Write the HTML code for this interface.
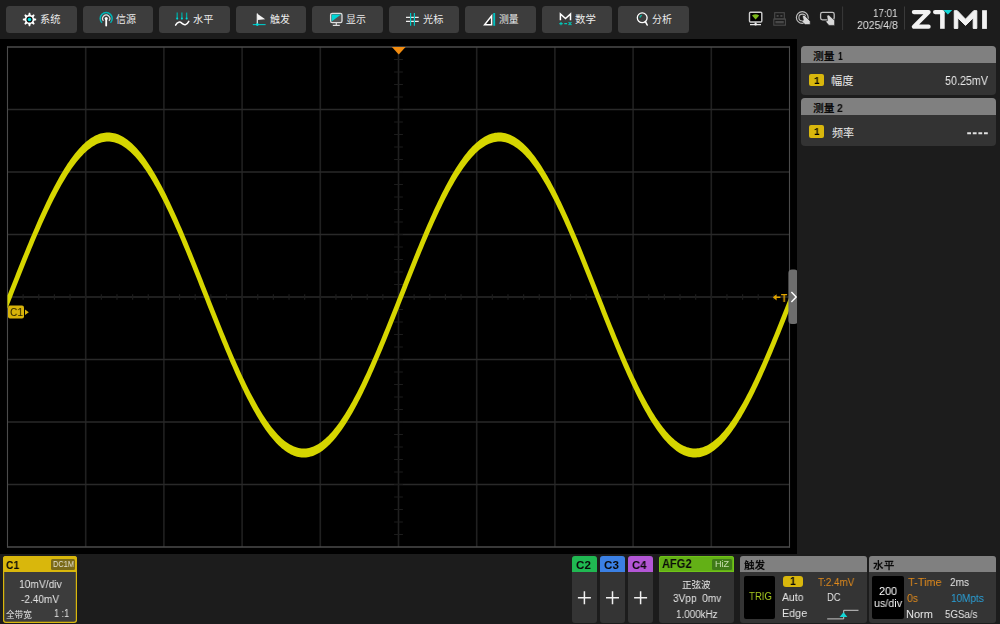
<!DOCTYPE html>
<html lang="zh"><head><meta charset="utf-8"><title>Oscilloscope</title>
<style>
html,body{margin:0;padding:0;background:#1b1b1b;}
body{width:1000px;height:624px;position:relative;overflow:hidden;font-family:"Liberation Sans",sans-serif;}
.abs,.t,.cj,.btn,.pn{position:absolute;}
.t{white-space:pre;transform-origin:0 0;display:block;will-change:transform;}
.cj{display:block;overflow:visible;}
.cj text{font-family:"Liberation Sans","Noto Sans CJK SC",sans-serif;}
#top{left:0;top:0;width:1000px;height:39px;background:#1c1c1c;}
.btn{top:6px;width:70.4px;height:27px;background:#3d3d3d;border-radius:3.5px;}
#scope{left:0;top:39px;width:797px;height:514.5px;background:#000;}
#side{left:797px;top:39px;width:203px;height:514.5px;background:#1c1c1c;}
#bot{left:0;top:553.5px;width:1000px;height:70.5px;background:#1c1c1c;}
.hd{position:absolute;left:0;top:0;right:0;}
</style></head><body>

<div id="top" class="abs"></div>
<div class="btn" style="left:6.4px"></div>
<svg class="cj" style="left:39.73px;top:12.79px" width="20.43" height="13.28" viewBox="0 -10.21 20.43 13.28"><text x="0" y="0" font-size="10.21" fill="#ececec">系统</text></svg>
<div class="btn" style="left:82.9px"></div>
<svg class="cj" style="left:116.32px;top:12.91px" width="19.93" height="12.95" viewBox="0 -9.96 19.93 12.95"><text x="0" y="0" font-size="9.96" fill="#ececec">信源</text></svg>
<div class="btn" style="left:159.4px"></div>
<svg class="cj" style="left:192.68px;top:12.73px" width="20.5" height="13.32" viewBox="0 -10.25 20.5 13.32"><text x="0" y="0" font-size="10.25" fill="#ececec">水平</text></svg>
<div class="btn" style="left:235.9px"></div>
<svg class="cj" style="left:269.53px;top:12.93px" width="19.96" height="12.97" viewBox="0 -9.98 19.96 12.97"><text x="0" y="0" font-size="9.98" fill="#ececec">触发</text></svg>
<div class="btn" style="left:312.4px"></div>
<svg class="cj" style="left:346.44px;top:12.73px" width="19.81" height="12.88" viewBox="0 -9.91 19.81 12.88"><text x="0" y="0" font-size="9.91" fill="#ececec">显示</text></svg>
<div class="btn" style="left:388.9px"></div>
<svg class="cj" style="left:422.7px;top:12.79px" width="20.35" height="13.23" viewBox="0 -10.18 20.35 13.23"><text x="0" y="0" font-size="10.18" fill="#ececec">光标</text></svg>
<div class="btn" style="left:465.4px"></div>
<svg class="cj" style="left:499.48px;top:12.97px" width="19.65" height="12.77" viewBox="0 -9.82 19.65 12.77"><text x="0" y="0" font-size="9.82" fill="#ececec">测量</text></svg>
<div class="btn" style="left:541.9px"></div>
<svg class="cj" style="left:575.47px;top:12.68px" width="20.78" height="13.51" viewBox="0 -10.39 20.78 13.51"><text x="0" y="0" font-size="10.39" fill="#ececec">数学</text></svg>
<div class="btn" style="left:618.4px"></div>
<svg class="cj" style="left:652.41px;top:12.89px" width="19.97" height="12.98" viewBox="0 -9.98 19.97 12.98"><text x="0" y="0" font-size="9.98" fill="#ececec">分析</text></svg>
<svg class="abs" style="left:0;top:0" width="1000" height="39" viewBox="0 0 1000 39"><path fill="#fff" d="M28.25 14.97L28.83 12.83L30.17 12.83L30.75 14.97L31.82 15.41L33.74 14.31L34.69 15.26L33.59 17.18L34.03 18.25L36.17 18.83L36.17 20.17L34.03 20.75L33.59 21.82L34.69 23.74L33.74 24.69L31.82 23.59L30.75 24.03L30.17 26.17L28.83 26.17L28.25 24.03L27.18 23.59L25.26 24.69L24.31 23.74L25.41 21.82L24.97 20.75L22.83 20.17L22.83 18.83L24.97 18.25L25.41 17.18L24.31 15.26L25.26 14.31L27.18 15.41Z"/><circle cx="29.5" cy="19.5" r="3.1" fill="#111"/><circle cx="29.5" cy="19.5" r="1.8" fill="#00d8d8"/><path d="M101.96 22.84A6.0 6.0 0 1 1 110.44 22.84" fill="none" stroke="#00b4b4" stroke-width="1.5"/><path d="M103.44 20.91A3.6 3.6 0 1 1 108.96 20.91" fill="none" stroke="#e0e0e0" stroke-width="1.2"/><circle cx="106.2" cy="18.6" r="1.5" fill="#fff"/><path d="M106.2 18.6V25.6" stroke="#fff" stroke-width="1.8" stroke-linecap="round"/><path d="M177.2 12.6V19.2" stroke="#00a8a0" stroke-width="1.3"/><circle cx="177.2" cy="18.5" r="1" fill="#00d8d8"/><path d="M181.9 12.6V19.2" stroke="#00a8a0" stroke-width="1.3"/><circle cx="181.9" cy="18.5" r="1" fill="#00d8d8"/><path d="M186.6 12.6V19.2" stroke="#00a8a0" stroke-width="1.3"/><circle cx="186.6" cy="18.5" r="1" fill="#00d8d8"/><path d="M175.6 25.2C177.5 21.3 180 21.6 182 23.4S186.6 25.6 188.8 21.4" fill="none" stroke="#fff" stroke-width="1.5" stroke-linecap="round"/><path d="M257.3 13.6V24.2" stroke="#eee" stroke-width="1.2"/><path d="M257 13.4L265.2 19.3L257.6 20Z" fill="#f4f4f4"/><path d="M252.8 24.6H265.6" stroke="#00c8c8" stroke-width="1.1"/><circle cx="257.3" cy="24.6" r="1.4" fill="#00d8d8"/><rect x="330.6" y="13.4" width="11.4" height="9.2" rx="1.6" fill="#555" stroke="#ddd" stroke-width="1.3"/><path d="M331.6 14.4H341L331.6 21.6Z" fill="#00d8d8"/><path d="M336.3 23V25.2M332.8 25.3H339.8" stroke="#ddd" stroke-width="1.2" fill="none"/><path d="M406 17.4H418.7M406 21.4H418.7" stroke="#f0f0f0" stroke-width="1.1"/><path d="M410.6 13V25.8M414.4 13V25.8" stroke="#00c8c8" stroke-width="1.2"/><path d="M484.6 24.7H491.6V15.8Z" fill="#222" stroke="#fff" stroke-width="1.5" stroke-linejoin="miter"/><path d="M494.2 13V25.8" stroke="#00c0c0" stroke-width="1.9"/><path d="M560.4 20.2V13.9L565.5 18.6L570.5 13.9V20.2" fill="none" stroke="#fff" stroke-width="1.5" stroke-linejoin="miter"/><path d="M559.3 23.6H562.7M561 21.9V25.3M564.3 23.6H567.1M568.6 22.2L571.4 25M571.4 22.2L568.6 25" stroke="#00c8b8" stroke-width="1.1" fill="none"/><circle cx="642.2" cy="17.8" r="4.9" fill="none" stroke="#fff" stroke-width="1.3"/><path d="M645.4 21.6L647.2 25" stroke="#fff" stroke-width="1.6" stroke-linecap="round"/><path d="M639.9 17.6A2.6 2.6 0 0 1 641.8 15.4" stroke="#00c0a8" stroke-width="1.3" fill="none"/><rect x="749.5" y="12.2" width="12.3" height="9.8" rx="1" fill="#000" stroke="#cfcfcf" stroke-width="1.4"/><path d="M752 15.6Q755.6 12.9 759.2 15.6L755.6 19.6Z" fill="#7cb81c"/><path d="M755.6 22.6V24.6M750 24.7H761" stroke="#e8e8e8" stroke-width="1.3"/><circle cx="755.6" cy="24.3" r="1.3" fill="#f0f0f0"/><rect x="774.7" y="12.7" width="9.6" height="6.3" fill="none" stroke="#4a4a4a" stroke-width="1.1"/><rect x="776.6" y="15" width="2" height="1.8" fill="#4a4a4a"/><rect x="780.4" y="15" width="2" height="1.8" fill="#4a4a4a"/><rect x="773.8" y="19" width="11.6" height="6.2" fill="none" stroke="#4a4a4a" stroke-width="1.1"/><rect x="775.4" y="21" width="8.4" height="2.4" fill="#484848"/><circle cx="802.3" cy="17.5" r="5.9" fill="none" stroke="#bdbdbd" stroke-width="1.2"/><circle cx="802.3" cy="17.5" r="3.4" fill="none" stroke="#bdbdbd" stroke-width="1.1"/><path d="M802.4 15.8L804.2 15.2L810.2 21.2V24.6H805.2L801.6 21.4L803.4 20.2Z" fill="#d8d8d8" stroke="#1c1c1c" stroke-width="0.6"/><rect x="820.6" y="12.4" width="13.6" height="7.4" rx="1.8" fill="none" stroke="#bdbdbd" stroke-width="1.3"/><path d="M826.8 15.6L828.8 15L834.6 20.6V25.4H829L825.6 21.6L827.6 20.6Z" fill="#d8d8d8" stroke="#1c1c1c" stroke-width="0.6"/><path d="M842.6 6.5V30M904.5 6.5V29.6" stroke="#3a3a3a" stroke-width="1"/><path d="M913.9 12.1H928.6L913.9 26.65H928.6" fill="none" stroke="#f2f2f2" stroke-width="4.25" stroke-linecap="round" stroke-linejoin="round"/><path d="M935.1 12.1H942.4" fill="none" stroke="#f2f2f2" stroke-width="4.25" stroke-linecap="round"/><rect x="940.1" y="12" width="4.6" height="16.8" fill="#f2f2f2"/><path d="M943.3 10H952.3L947.9 14.6Z" fill="#12d6d6"/><path d="M954.25 28.4V10.7H957.3L965.5 19.2L973.7 10.7H976.8V28.4H973.2V17.9L965.5 25.4L957.8 17.9V28.4Z" fill="#f2f2f2" stroke="#f2f2f2" stroke-width="1" stroke-linejoin="round"/><rect x="982.1" y="10.2" width="4.8" height="18.7" fill="#f2f2f2"/></svg>
<span class="t" style="left:873.16px;top:6.94px;font-size:11.63px;line-height:11.63px;color:#e0e0e0;transform:scaleX(0.8392);">17:01</span>
<span class="t" style="left:857.07px;top:18.94px;font-size:11.63px;line-height:11.63px;color:#e0e0e0;transform:scaleX(0.9033);">2025/4/8</span>
<div id="scope" class="abs"></div>
<svg class="abs" style="left:0;top:0" width="1000" height="560" viewBox="0 0 1000 560"><path d="M85.7 47.0V547.0M163.9 47.0V547.0M242.1 47.0V547.0M320.3 47.0V547.0M476.7 47.0V547.0M554.9 47.0V547.0M633.1 47.0V547.0M711.3 47.0V547.0" stroke="#202020" stroke-width="1.6" fill="none"/><path d="M7.5 109.5H789.5M7.5 172H789.5M7.5 234.5H789.5M7.5 359.5H789.5M7.5 422H789.5M7.5 484.5H789.5" stroke="#292929" stroke-width="1.7" fill="none"/><path d="M398.5 47.0V547.0" stroke="#202020" stroke-width="1.6" fill="none"/><path d="M7.5 297H789.5" stroke="#2a2a2a" stroke-width="1.7" fill="none"/><path d="M23.14 294.2V299.8M38.78 294.2V299.8M54.42 294.2V299.8M70.06 294.2V299.8M85.7 294.2V299.8M101.34 294.2V299.8M116.98 294.2V299.8M132.62 294.2V299.8M148.26 294.2V299.8M163.9 294.2V299.8M179.54 294.2V299.8M195.18 294.2V299.8M210.82 294.2V299.8M226.46 294.2V299.8M242.1 294.2V299.8M257.74 294.2V299.8M273.38 294.2V299.8M289.02 294.2V299.8M304.66 294.2V299.8M320.3 294.2V299.8M335.94 294.2V299.8M351.58 294.2V299.8M367.22 294.2V299.8M382.86 294.2V299.8M398.5 294.2V299.8M414.14 294.2V299.8M429.78 294.2V299.8M445.42 294.2V299.8M461.06 294.2V299.8M476.7 294.2V299.8M492.34 294.2V299.8M507.98 294.2V299.8M523.62 294.2V299.8M539.26 294.2V299.8M554.9 294.2V299.8M570.54 294.2V299.8M586.18 294.2V299.8M601.82 294.2V299.8M617.46 294.2V299.8M633.1 294.2V299.8M648.74 294.2V299.8M664.38 294.2V299.8M680.02 294.2V299.8M695.66 294.2V299.8M711.3 294.2V299.8M726.94 294.2V299.8M742.58 294.2V299.8M758.22 294.2V299.8M773.86 294.2V299.8M394.1 59.5H402.9M394.1 72H402.9M394.1 84.5H402.9M394.1 97H402.9M394.1 109.5H402.9M394.1 122H402.9M394.1 134.5H402.9M394.1 147H402.9M394.1 159.5H402.9M394.1 172H402.9M394.1 184.5H402.9M394.1 197H402.9M394.1 209.5H402.9M394.1 222H402.9M394.1 234.5H402.9M394.1 247H402.9M394.1 259.5H402.9M394.1 272H402.9M394.1 284.5H402.9M394.1 297H402.9M394.1 309.5H402.9M394.1 322H402.9M394.1 334.5H402.9M394.1 347H402.9M394.1 359.5H402.9M394.1 372H402.9M394.1 384.5H402.9M394.1 397H402.9M394.1 409.5H402.9M394.1 422H402.9M394.1 434.5H402.9M394.1 447H402.9M394.1 459.5H402.9M394.1 472H402.9M394.1 484.5H402.9M394.1 497H402.9M394.1 509.5H402.9M394.1 522H402.9M394.1 534.5H402.9" stroke="#1c1c1c" stroke-width="1.2" fill="none"/><path d="M7.5 47.0H789.5M7.5 547.0H789.5" stroke="#4b4b4b" stroke-width="1.6" fill="none"/><path d="M7.5 46.2V547.8M789.5 46.2V547.8" stroke="#4b4b4b" stroke-width="1.1" fill="none"/><path fill="#d6d600" d="M7.5 295.41L9 291.6L10.5 287.79L12 283.99L13.5 280.19L15 276.39L16.5 272.61L18 268.84L19.5 265.07L21 261.33L22.5 257.6L24 253.89L25.5 250.2L27 246.54L28.5 242.9L30 239.29L31.5 235.71L33 232.16L34.5 228.65L36 225.17L37.5 221.74L39 218.34L40.5 214.98L42 211.67L43.5 208.4L45 205.18L46.5 202.02L48 198.9L49.5 195.84L51 192.83L52.5 189.88L54 186.99L55.5 184.15L57 181.38L58.5 178.68L60 176.03L61.5 173.46L63 170.95L64.5 168.51L66 166.15L67.5 163.85L69 161.63L70.5 159.48L72 157.41L73.5 155.42L75 153.5L76.5 151.66L78 149.9L79.5 148.23L81 146.63L82.5 145.12L84 143.69L85.5 142.34L87 141.08L88.5 139.91L90 138.82L91.5 137.81L93 136.9L94.5 136.06L96 135.32L97.5 134.66L99 134.09L100.5 133.61L102 133.21L103.5 132.9L105 132.68L106.5 132.55L108 132.5L109.5 132.54L111 132.67L112.5 132.88L114 133.18L115.5 133.57L117 134.05L118.5 134.61L120 135.26L121.5 136L123 136.82L124.5 137.73L126 138.73L127.5 139.81L129 140.98L130.5 142.24L132 143.57L133.5 145L135 146.5L136.5 148.09L138 149.76L139.5 151.51L141 153.34L142.5 155.25L144 157.24L145.5 159.31L147 161.45L148.5 163.66L150 165.95L151.5 168.31L153 170.75L154.5 173.25L156 175.82L157.5 178.45L159 181.15L160.5 183.92L162 186.75L163.5 189.63L165 192.58L166.5 195.58L168 198.64L169.5 201.75L171 204.92L172.5 208.13L174 211.39L175.5 214.7L177 218.06L178.5 221.45L180 224.89L181.5 228.36L183 231.87L184.5 235.41L186 238.99L187.5 242.6L189 246.23L190.5 249.9L192 253.58L193.5 257.29L195 261.02L196.5 264.76L198 268.52L199.5 272.29L201 276.08L202.5 279.87L204 283.67L205.5 287.48L207 291.28L208.5 295.09L210 298.89L211.5 302.69L213 306.49L214.5 310.27L216 314.04L217.5 317.8L219 321.55L220.5 325.27L222 328.98L223.5 332.67L225 336.33L226.5 339.96L228 343.57L229.5 347.15L231 350.69L232.5 354.2L234 357.67L235.5 361.1L237 364.5L238.5 367.85L240 371.16L241.5 374.42L243 377.63L244.5 380.79L246 383.9L247.5 386.95L249 389.95L250.5 392.89L252 395.78L253.5 398.6L255 401.36L256.5 404.05L258 406.68L259.5 409.24L261 411.73L262.5 414.16L264 416.51L265.5 418.78L267 420.99L268.5 423.11L270 425.16L271.5 427.13L273 429.02L274.5 430.83L276 432.56L277.5 434.2L279 435.76L280.5 437.24L282 438.63L283.5 439.93L285 441.14L286.5 442.26L288 443.29L289.5 444.23L291 445.08L292.5 445.84L294 446.5L295.5 447.07L297 447.55L298.5 447.93L300 448.21L301.5 448.4L303 448.49L304.5 448.49L306 448.39L307.5 448.19L309 447.9L310.5 447.51L312 447.03L313.5 446.45L315 445.78L316.5 445.02L318 444.16L319.5 443.21L321 442.17L322.5 441.04L324 439.82L325.5 438.51L327 437.12L328.5 435.64L330 434.07L331.5 432.42L333 430.69L334.5 428.87L336 426.97L337.5 424.99L339 422.94L340.5 420.81L342 418.6L343.5 416.31L345 413.96L346.5 411.53L348 409.03L349.5 406.46L351 403.83L352.5 401.13L354 398.36L355.5 395.54L357 392.65L358.5 389.7L360 386.7L361.5 383.64L363 380.53L364.5 377.36L366 374.15L367.5 370.88L369 367.57L370.5 364.22L372 360.82L373.5 357.38L375 353.91L376.5 350.39L378 346.85L379.5 343.27L381 339.66L382.5 336.02L384 332.36L385.5 328.67L387 324.96L388.5 321.24L390 317.49L391.5 313.73L393 309.95L394.5 306.17L396 302.38L397.5 298.58L399 294.77L400.5 290.96L402 287.16L403.5 283.35L405 279.56L406.5 275.76L408 271.98L409.5 268.21L411 264.45L412.5 260.71L414 256.98L415.5 253.27L417 249.59L418.5 245.93L420 242.3L421.5 238.69L423 235.12L424.5 231.58L426 228.07L427.5 224.6L429 221.17L430.5 217.77L432 214.43L433.5 211.12L435 207.86L436.5 204.65L438 201.49L439.5 198.39L441 195.33L442.5 192.33L444 189.39L445.5 186.51L447 183.69L448.5 180.93L450 178.23L451.5 175.6L453 173.04L454.5 170.54L456 168.11L457.5 165.76L459 163.48L460.5 161.27L462 159.13L463.5 157.07L465 155.09L466.5 153.19L468 151.36L469.5 149.62L471 147.96L472.5 146.37L474 144.88L475.5 143.46L477 142.13L478.5 140.88L480 139.72L481.5 138.64L483 137.65L484.5 136.75L486 135.93L487.5 135.2L489 134.56L490.5 134.01L492 133.54L493.5 133.15L495 132.86L496.5 132.65L498 132.53L499.5 132.5L501 132.56L502.5 132.7L504 132.93L505.5 133.24L507 133.65L508.5 134.14L510 134.71L511.5 135.38L513 136.13L514.5 136.97L516 137.89L517.5 138.91L519 140L520.5 141.19L522 142.45L523.5 143.81L525 145.24L526.5 146.76L528 148.36L529.5 150.05L531 151.81L532.5 153.66L534 155.58L535.5 157.58L537 159.66L538.5 161.81L540 164.04L541.5 166.34L543 168.71L544.5 171.16L546 173.67L547.5 176.25L549 178.9L550.5 181.61L552 184.39L553.5 187.22L555 190.12L556.5 193.08L558 196.09L559.5 199.16L561 202.28L562.5 205.45L564 208.67L565.5 211.94L567 215.26L568.5 218.62L570 222.02L571.5 225.46L573 228.94L574.5 232.46L576 236.01L577.5 239.59L579 243.2L580.5 246.84L582 250.51L583.5 254.2L585 257.91L586.5 261.64L588 265.39L589.5 269.15L591 272.92L592.5 276.71L594 280.5L595.5 284.31L597 288.11L598.5 291.92L600 295.72L601.5 299.53L603 303.32L604.5 307.12L606 310.9L607.5 314.67L609 318.43L610.5 322.17L612 325.89L613.5 329.6L615 333.28L616.5 336.93L618 340.57L619.5 344.17L621 347.74L622.5 351.28L624 354.78L625.5 358.25L627 361.67L628.5 365.06L630 368.4L631.5 371.7L633 374.95L634.5 378.16L636 381.31L637.5 384.41L639 387.46L640.5 390.45L642 393.38L643.5 396.25L645 399.06L646.5 401.81L648 404.49L649.5 407.11L651 409.66L652.5 412.14L654 414.55L655.5 416.89L657 419.16L658.5 421.35L660 423.46L661.5 425.5L663 427.45L664.5 429.33L666 431.13L667.5 432.84L669 434.47L670.5 436.02L672 437.48L673.5 438.85L675 440.13L676.5 441.33L678 442.44L679.5 443.46L681 444.38L682.5 445.22L684 445.96L685.5 446.6L687 447.16L688.5 447.62L690 447.98L691.5 448.25L693 448.42L694.5 448.5L696 448.48L697.5 448.36L699 448.15L700.5 447.84L702 447.44L703.5 446.94L705 446.35L706.5 445.66L708 444.88L709.5 444.01L711 443.04L712.5 441.99L714 440.84L715.5 439.61L717 438.29L718.5 436.88L720 435.38L721.5 433.8L723 432.14L724.5 430.39L726 428.56L727.5 426.65L729 424.66L730.5 422.59L732 420.44L733.5 418.22L735 415.93L736.5 413.56L738 411.12L739.5 408.61L741 406.03L742.5 403.38L744 400.67L745.5 397.9L747 395.06L748.5 392.16L750 389.21L751.5 386.19L753 383.12L754.5 380L756 376.83L757.5 373.6L759 370.33L760.5 367.02L762 363.65L763.5 360.25L765 356.81L766.5 353.32L768 349.81L769.5 346.25L771 342.67L772.5 339.06L774 335.41L775.5 331.75L777 328.06L778.5 324.34L780 320.61L781.5 316.86L783 313.1L784.5 309.32L786 305.54L787.5 301.74L789 297.94L789.5 296.67L789.5 309.81L789 311.08L787.5 314.87L786 318.65L784.5 322.42L783 326.18L781.5 329.92L780 333.64L778.5 337.34L777 341.02L775.5 344.68L774 348.31L772.5 351.91L771 355.47L769.5 359.01L768 362.51L766.5 365.98L765 369.4L763.5 372.79L762 376.13L760.5 379.43L759 382.68L757.5 385.88L756 389.03L754.5 392.13L753 395.17L751.5 398.16L750 401.09L748.5 403.97L747 406.78L745.5 409.53L744 412.21L742.5 414.83L741 417.38L739.5 419.87L738 422.28L736.5 424.63L735 426.9L733.5 429.09L732 431.22L730.5 433.26L729 435.23L727.5 437.12L726 438.93L724.5 440.66L723 442.31L721.5 443.88L720 445.37L718.5 446.77L717 448.08L715.5 449.32L714 450.46L712.5 451.53L711 452.5L709.5 453.39L708 454.19L706.5 454.91L705 455.54L703.5 456.08L702 456.53L700.5 456.9L699 457.18L697.5 457.37L696 457.48L694.5 457.5L693 457.43L691.5 457.27L690 457.03L688.5 456.7L687 456.28L685.5 455.77L684 455.18L682.5 454.5L681 453.74L679.5 452.88L678 451.94L676.5 450.92L675 449.81L673.5 448.61L672 447.33L670.5 445.96L669 444.51L667.5 442.98L666 441.36L664.5 439.66L663 437.89L661.5 436.03L660 434.09L658.5 432.08L657 429.99L655.5 427.82L654 425.58L652.5 423.27L651 420.88L649.5 418.43L648 415.9L646.5 413.31L645 410.65L643.5 407.93L642 405.14L640.5 402.3L639 399.39L637.5 396.42L636 393.4L634.5 390.33L633 387.2L631.5 384.02L630 380.79L628.5 377.51L627 374.18L625.5 370.82L624 367.41L622.5 363.96L621 360.47L619.5 356.95L618 353.4L616.5 349.81L615 346.19L613.5 342.55L612 338.88L610.5 335.18L609 331.47L607.5 327.74L606 323.99L604.5 320.22L603 316.45L601.5 312.66L600 308.86L598.5 305.06L597 301.26L595.5 297.45L594 293.64L592.5 289.84L591 286.04L589.5 282.25L588 278.47L586.5 274.7L585 270.95L583.5 267.21L582 263.49L580.5 259.79L579 256.11L577.5 252.46L576 248.83L574.5 245.24L573 241.67L571.5 238.14L570 234.64L568.5 231.18L567 227.76L565.5 224.38L564 221.04L562.5 217.75L561 214.51L559.5 211.31L558 208.17L556.5 205.08L555 202.04L553.5 199.06L552 196.14L550.5 193.28L549 190.48L547.5 187.74L546 185.07L544.5 182.46L543 179.92L541.5 177.45L540 175.05L538.5 172.73L537 170.47L535.5 168.3L534 166.19L532.5 164.17L531 162.23L529.5 160.36L528 158.58L526.5 156.88L525 155.27L523.5 153.73L522 152.29L520.5 150.93L519 149.66L517.5 148.48L516 147.39L514.5 146.38L513 145.47L511.5 144.65L510 143.93L508.5 143.3L507 142.76L505.5 142.32L504 141.97L502.5 141.72L501 141.56L499.5 141.5L498 141.54L496.5 141.67L495 141.9L493.5 142.22L492 142.64L490.5 143.15L489 143.76L487.5 144.46L486 145.26L484.5 146.15L483 147.13L481.5 148.2L480 149.36L478.5 150.6L477 151.94L475.5 153.37L474 154.88L472.5 156.47L471 158.15L469.5 159.91L468 161.75L466.5 163.68L465 165.68L463.5 167.76L462 169.92L460.5 172.16L459 174.46L457.5 176.84L456 179.3L454.5 181.82L453 184.41L451.5 187.06L450 189.79L448.5 192.57L447 195.42L445.5 198.33L444 201.29L442.5 204.31L441 207.39L439.5 210.52L438 213.71L436.5 216.94L435 220.22L433.5 223.54L432 226.91L430.5 230.32L429 233.77L427.5 237.26L426 240.78L424.5 244.34L423 247.93L421.5 251.55L420 255.2L418.5 258.87L417 262.56L415.5 266.28L414 270.01L412.5 273.76L411 277.53L409.5 281.31L408 285.09L406.5 288.89L405 292.69L403.5 296.5L402 300.3L400.5 304.11L399 307.91L397.5 311.71L396 315.5L394.5 319.28L393 323.05L391.5 326.8L390 330.54L388.5 334.26L387 337.96L385.5 341.63L384 345.28L382.5 348.91L381 352.5L379.5 356.07L378 359.6L376.5 363.09L375 366.55L373.5 369.97L372 373.35L370.5 376.68L369 379.97L367.5 383.21L366 386.41L364.5 389.55L363 392.64L361.5 395.67L360 398.65L358.5 401.58L357 404.44L355.5 407.24L354 409.98L352.5 412.65L351 415.26L349.5 417.8L348 420.28L346.5 422.68L345 425.01L343.5 427.27L342 429.45L340.5 431.56L339 433.6L337.5 435.55L336 437.43L334.5 439.23L333 440.94L331.5 442.58L330 444.13L328.5 445.61L327 446.99L325.5 448.3L324 449.51L322.5 450.65L321 451.69L319.5 452.66L318 453.53L316.5 454.32L315 455.02L313.5 455.63L312 456.16L310.5 456.6L309 456.95L307.5 457.22L306 457.4L304.5 457.49L303 457.49L301.5 457.41L300 457.24L298.5 456.98L297 456.63L295.5 456.2L294 455.68L292.5 455.07L291 454.38L289.5 453.6L288 452.73L286.5 451.78L285 450.74L283.5 449.61L282 448.4L280.5 447.1L279 445.72L277.5 444.26L276 442.71L274.5 441.08L273 439.37L271.5 437.58L270 435.71L268.5 433.76L267 431.74L265.5 429.63L264 427.45L262.5 425.2L261 422.88L259.5 420.48L258 418.01L256.5 415.48L255 412.87L253.5 410.2L252 407.47L250.5 404.67L249 401.82L247.5 398.9L246 395.92L244.5 392.89L243 389.81L241.5 386.67L240 383.48L238.5 380.24L237 376.96L235.5 373.63L234 370.25L232.5 366.84L231 363.38L229.5 359.89L228 356.36L226.5 352.8L225 349.21L223.5 345.59L222 341.94L220.5 338.26L219 334.57L217.5 330.85L216 327.11L214.5 323.36L213 319.59L211.5 315.81L210 312.03L208.5 308.23L207 304.43L205.5 300.62L204 296.81L202.5 293.01L201 289.21L199.5 285.41L198 281.62L196.5 277.84L195 274.08L193.5 270.32L192 266.59L190.5 262.87L189 259.17L187.5 255.5L186 251.85L184.5 248.23L183 244.64L181.5 241.08L180 237.55L178.5 234.06L177 230.61L175.5 227.19L174 223.82L172.5 220.49L171 217.21L169.5 213.97L168 210.79L166.5 207.65L165 204.57L163.5 201.54L162 198.57L160.5 195.66L159 192.81L157.5 190.02L156 187.29L154.5 184.63L153 182.03L151.5 179.5L150 177.05L148.5 174.66L147 172.34L145.5 170.1L144 167.94L142.5 165.85L141 163.84L139.5 161.91L138 160.06L136.5 158.29L135 156.61L133.5 155L132 153.49L130.5 152.06L129 150.71L127.5 149.46L126 148.29L124.5 147.21L123 146.23L121.5 145.33L120 144.53L118.5 143.82L117 143.2L115.5 142.68L114 142.25L112.5 141.92L111 141.68L109.5 141.54L108 141.5L106.5 141.55L105 141.7L103.5 141.94L102 142.28L100.5 142.72L99 143.25L97.5 143.87L96 144.59L94.5 145.4L93 146.3L91.5 147.3L90 148.38L88.5 149.56L87 150.82L85.5 152.17L84 153.61L82.5 155.14L81 156.74L79.5 158.44L78 160.21L76.5 162.07L75 164.01L73.5 166.02L72 168.12L70.5 170.29L69 172.53L67.5 174.85L66 177.25L64.5 179.71L63 182.24L61.5 184.85L60 187.51L58.5 190.25L57 193.04L55.5 195.9L54 198.82L52.5 201.79L51 204.82L49.5 207.91L48 211.05L46.5 214.24L45 217.48L43.5 220.77L42 224.1L40.5 227.48L39 230.89L37.5 234.35L36 237.84L34.5 241.37L33 244.94L31.5 248.53L30 252.16L28.5 255.81L27 259.48L25.5 263.18L24 266.9L22.5 270.64L21 274.39L19.5 278.16L18 281.94L16.5 285.73L15 289.52L13.5 293.33L12 297.13L10.5 300.94L9 304.74L7.5 308.55Z"/><path d="M391.9 47L405.6 47L398.75 54.4Z" fill="#f28c10"/><rect x="8" y="305.6" width="16" height="13" rx="2" fill="#d8b40a"/><path d="M25 309.4L28.8 312.2L25 315Z" fill="#d8b40a"/><path d="M772.8 297.3L776.6 294.2V296.6H780.4V298H776.6V300.4Z" fill="#e0a400"/><rect x="788.4" y="269.5" width="9.4" height="54.4" rx="3.5" fill="#6e6e6e"/><path d="M791.4 292L796.2 297L791.4 302" fill="none" stroke="#fff" stroke-width="1.4"/></svg>
<span class="t" style="left:9.68px;top:306.98px;font-size:11.34px;line-height:11.34px;color:#2a2400;transform:scaleX(0.8980);">C1</span>
<span class="t" style="left:781.49px;top:291.54px;font-size:11.63px;line-height:11.63px;color:#e0a400;transform:scaleX(0.8763);font-weight:bold;">T</span>
<div id="side" class="abs"></div>
<div class="pn" style="left:800.8px;top:46px;width:195.2px;height:48.5px;background:#333;border-radius:4px;overflow:hidden"><div class="hd" style="height:17.2px;background:#808080"></div></div>
<svg class="cj" style="left:812.5px;top:49.32px" width="21.54" height="14" viewBox="0 -10.77 21.54 14"><text x="0" y="0" font-size="10.77" font-weight="bold" fill="#0a0a0a">测量</text></svg>
<span class="t" style="left:838.06px;top:50.16px;font-size:11.77px;line-height:11.77px;color:#0a0a0a;transform:scaleX(0.7301);font-weight:bold;">1</span>
<div class="pn" style="left:808.5px;top:73.5px;width:15.7px;height:12.5px;background:#d9b70c;border-radius:2px"></div>
<span class="t" style="left:813.97px;top:75.87px;font-size:10.76px;line-height:10.76px;color:#000;transform:scaleX(0.8722);font-family:&quot;Liberation Mono&quot;,monospace;font-weight:bold;">1</span>
<svg class="cj" style="left:831.46px;top:74.06px" width="22.47" height="14.6" viewBox="0 -11.23 22.47 14.6"><text x="0" y="0" font-size="11.23" fill="#e8e8e8">幅度</text></svg>
<span class="t" style="left:945.07px;top:75.4px;font-size:12.5px;line-height:12.5px;color:#e8e8e8;transform:scaleX(0.8590);">50.25mV</span>
<div class="pn" style="left:800.8px;top:97.6px;width:195.2px;height:48.5px;background:#333;border-radius:4px;overflow:hidden"><div class="hd" style="height:17.2px;background:#808080"></div></div>
<svg class="cj" style="left:812.5px;top:100.92px" width="21.54" height="14" viewBox="0 -10.77 21.54 14"><text x="0" y="0" font-size="10.77" font-weight="bold" fill="#0a0a0a">测量</text></svg>
<span class="t" style="left:837.24px;top:101.76px;font-size:11.77px;line-height:11.77px;color:#0a0a0a;transform:scaleX(0.8821);font-weight:bold;">2</span>
<div class="pn" style="left:808.5px;top:125.1px;width:15.7px;height:12.5px;background:#d9b70c;border-radius:2px"></div>
<span class="t" style="left:813.97px;top:127.47px;font-size:10.76px;line-height:10.76px;color:#000;transform:scaleX(0.8722);font-family:&quot;Liberation Mono&quot;,monospace;font-weight:bold;">1</span>
<svg class="cj" style="left:831.79px;top:125.72px" width="22.27" height="14.47" viewBox="0 -11.13 22.27 14.47"><text x="0" y="0" font-size="11.13" fill="#e8e8e8">频率</text></svg>
<svg class="abs" style="left:960px;top:128px" width="36" height="10" viewBox="960 128 36 10"><path d="M967.2 133.2H971M972.8 133.2H976.6M978.4 133.2H982.2M984 133.2H987.8" stroke="#e0e0e0" stroke-width="1.9"/></svg>
<div id="bot" class="abs"></div>
<div class="pn" style="left:3.2px;top:556px;width:74.2px;height:67.4px;background:#3c3c3c;border-radius:3px;overflow:hidden;box-shadow:inset 0 0 0 1.2px #d9b70c;"><div class="hd" style="height:16.2px;background:#d9b70c"></div></div>
<span class="t" style="left:5.78px;top:558.84px;font-size:11.63px;line-height:11.63px;color:#0a0a0a;transform:scaleX(0.8817);font-weight:bold;">C1</span>
<div class="pn" style="left:51.4px;top:558.6px;width:23.6px;height:11.2px;background:#7a6a18;border-radius:1.5px"></div>
<span class="t" style="left:52.79px;top:560.49px;font-size:8.72px;line-height:8.72px;color:#e4e0d0;transform:scaleX(0.8505);">DC1M</span>
<span class="t" style="left:19.02px;top:578.58px;font-size:11.34px;line-height:11.34px;color:#e6e6e6;transform:scaleX(0.9060);">10mV/div</span>
<span class="t" style="left:21.35px;top:593.58px;font-size:11.34px;line-height:11.34px;color:#e6e6e6;transform:scaleX(0.8890);">-2.40mV</span>
<svg class="cj" style="left:6.38px;top:608.56px" width="25.76" height="11.16" viewBox="0 -8.59 25.76 11.16"><text x="0" y="0" font-size="8.59" fill="#e6e6e6">全带宽</text></svg>
<span class="t" style="left:53.51px;top:608.47px;font-size:10.76px;line-height:10.76px;color:#e6e6e6;transform:scaleX(0.8436);">1 :1</span>
<div class="pn" style="left:571.9px;top:556px;width:25.1px;height:67.4px;background:#343434;border-radius:3px;overflow:hidden;"><div class="hd" style="height:16.0px;background:#20b852"></div></div>
<span class="t" style="left:576.03px;top:558.84px;font-size:11.63px;line-height:11.63px;color:#0a0a0a;transform:scaleX(0.9769);font-weight:bold;">C2</span>
<div class="pn" style="left:600px;top:556px;width:24.9px;height:67.4px;background:#343434;border-radius:3px;overflow:hidden;"><div class="hd" style="height:16.0px;background:#3b80e4"></div></div>
<span class="t" style="left:604.14px;top:558.84px;font-size:11.63px;line-height:11.63px;color:#0a0a0a;transform:scaleX(0.9737);font-weight:bold;">C3</span>
<div class="pn" style="left:628.1px;top:556px;width:24.9px;height:67.4px;background:#343434;border-radius:3px;overflow:hidden;"><div class="hd" style="height:16.0px;background:#b356d6"></div></div>
<span class="t" style="left:632.24px;top:558.84px;font-size:11.63px;line-height:11.63px;color:#0a0a0a;transform:scaleX(0.9634);font-weight:bold;">C4</span>
<svg class="abs" style="left:560px;top:585px" width="100" height="26" viewBox="560 585 100 26"><path d="M577.9 597.7H590.9M584.4 591.2V604.2M606 597.7H619M612.5 591.2V604.2M634.1 597.7H647.1M640.6 591.2V604.2" stroke="#f0f0f0" stroke-width="1.5" fill="none"/></svg>
<div class="pn" style="left:659.3px;top:556px;width:74.3px;height:67.4px;background:#343434;border-radius:3px;overflow:hidden;"><div class="hd" style="height:16.0px;background:#63b016"></div></div>
<div class="pn" style="left:659.3px;top:556px;width:74.3px;height:16px;box-shadow:inset 0 0 0 1px #6fc418;border-radius:3px 3px 0 0"></div>
<span class="t" style="left:661.72px;top:559.19px;font-size:11.92px;line-height:11.92px;color:#0a0a0a;transform:scaleX(0.9319);font-weight:bold;">AFG2</span>
<div class="pn" style="left:711.9px;top:558.5px;width:20px;height:11.5px;background:#3f7a18;border-radius:1.5px"></div>
<span class="t" style="left:715.05px;top:560.49px;font-size:8.72px;line-height:8.72px;color:#c8e0b0;transform:scaleX(1.0418);">HiZ</span>
<svg class="cj" style="left:681.5px;top:578.36px" width="28.71" height="12.44" viewBox="0 -9.57 28.71 12.44"><text x="0" y="0" font-size="9.57" fill="#e6e6e6">正弦波</text></svg>
<span class="t" style="left:672.52px;top:593.08px;font-size:11.34px;line-height:11.34px;color:#e6e6e6;transform:scaleX(0.8916);">3Vpp  0mv</span>
<span class="t" style="left:675.95px;top:607.54px;font-size:11.63px;line-height:11.63px;color:#e6e6e6;transform:scaleX(0.8456);">1.000kHz</span>
<div class="pn" style="left:739.7px;top:556px;width:126.9px;height:67.4px;background:#343434;border-radius:3px;overflow:hidden;"><div class="hd" style="height:16.0px;background:#808080"></div></div>
<svg class="cj" style="left:743.98px;top:557.85px" width="21.25" height="13.81" viewBox="0 -10.62 21.25 13.81"><text x="0" y="0" font-size="10.62" font-weight="bold" fill="#0a0a0a">触发</text></svg>
<div class="pn" style="left:743.8px;top:576px;width:31.3px;height:43.3px;background:#000;border-radius:2px"></div>
<span class="t" style="left:748.98px;top:591.48px;font-size:11.34px;line-height:11.34px;color:#a4c61e;transform:scaleX(0.8468);">TRIG</span>
<div class="pn" style="left:782.5px;top:575.7px;width:20.7px;height:11.4px;background:#d9b70c;border-radius:3px"></div>
<span class="t" style="left:789.75px;top:576.18px;font-size:11.34px;line-height:11.34px;color:#0a0a0a;transform:scaleX(0.9099);font-weight:bold;">1</span>
<span class="t" style="left:817.78px;top:576.26px;font-size:11.77px;line-height:11.77px;color:#e08a1c;transform:scaleX(0.8421);">T:2.4mV</span>
<span class="t" style="left:782.48px;top:591.78px;font-size:11.34px;line-height:11.34px;color:#e6e6e6;transform:scaleX(0.9245);">Auto</span>
<span class="t" style="left:827.13px;top:591.78px;font-size:11.34px;line-height:11.34px;color:#e6e6e6;transform:scaleX(0.8260);">DC</span>
<span class="t" style="left:781.62px;top:608.38px;font-size:11.34px;line-height:11.34px;color:#e6e6e6;transform:scaleX(0.9503);">Edge</span>
<svg class="abs" style="left:820px;top:605px" width="44" height="18" viewBox="820 605 44 18"><path d="M827.2 618.9H843.7V610.3H858.5" fill="none" stroke="#c8c8c8" stroke-width="1"/><path d="M839.6 616.9L843.5 612.3L847.4 616.9Z" fill="#12d6d6"/></svg>
<div class="pn" style="left:868.8px;top:556px;width:127.4px;height:67.4px;background:#343434;border-radius:3px;overflow:hidden;"><div class="hd" style="height:16.0px;background:#808080"></div></div>
<svg class="cj" style="left:873.17px;top:557.99px" width="21.29" height="13.84" viewBox="0 -10.65 21.29 13.84"><text x="0" y="0" font-size="10.65" font-weight="bold" fill="#0a0a0a">水平</text></svg>
<div class="pn" style="left:872.4px;top:576px;width:31.8px;height:43.3px;background:#000;border-radius:2px"></div>
<span class="t" style="left:879.35px;top:586.08px;font-size:11.34px;line-height:11.34px;color:#ffffff;transform:scaleX(0.9608);">200</span>
<span class="t" style="left:873.81px;top:598.35px;font-size:11.19px;line-height:11.19px;color:#f0f0f0;transform:scaleX(0.9553);">us/div</span>
<span class="t" style="left:907.95px;top:576.26px;font-size:11.77px;line-height:11.77px;color:#e08a1c;transform:scaleX(0.9318);">T-Time</span>
<span class="t" style="left:950.19px;top:576.26px;font-size:11.77px;line-height:11.77px;color:#e6e6e6;transform:scaleX(0.8622);">2ms</span>
<span class="t" style="left:906.69px;top:593.18px;font-size:11.34px;line-height:11.34px;color:#e08a1c;transform:scaleX(0.9261);">0s</span>
<span class="t" style="left:950.64px;top:593.18px;font-size:11.34px;line-height:11.34px;color:#2aa0d8;transform:scaleX(0.8829);">10Mpts</span>
<span class="t" style="left:906.21px;top:608.53px;font-size:11.05px;line-height:11.05px;color:#e6e6e6;transform:scaleX(0.9855);">Norm</span>
<span class="t" style="left:945.21px;top:608.53px;font-size:11.05px;line-height:11.05px;color:#e6e6e6;transform:scaleX(0.8806);">5GSa/s</span>
</body></html>
